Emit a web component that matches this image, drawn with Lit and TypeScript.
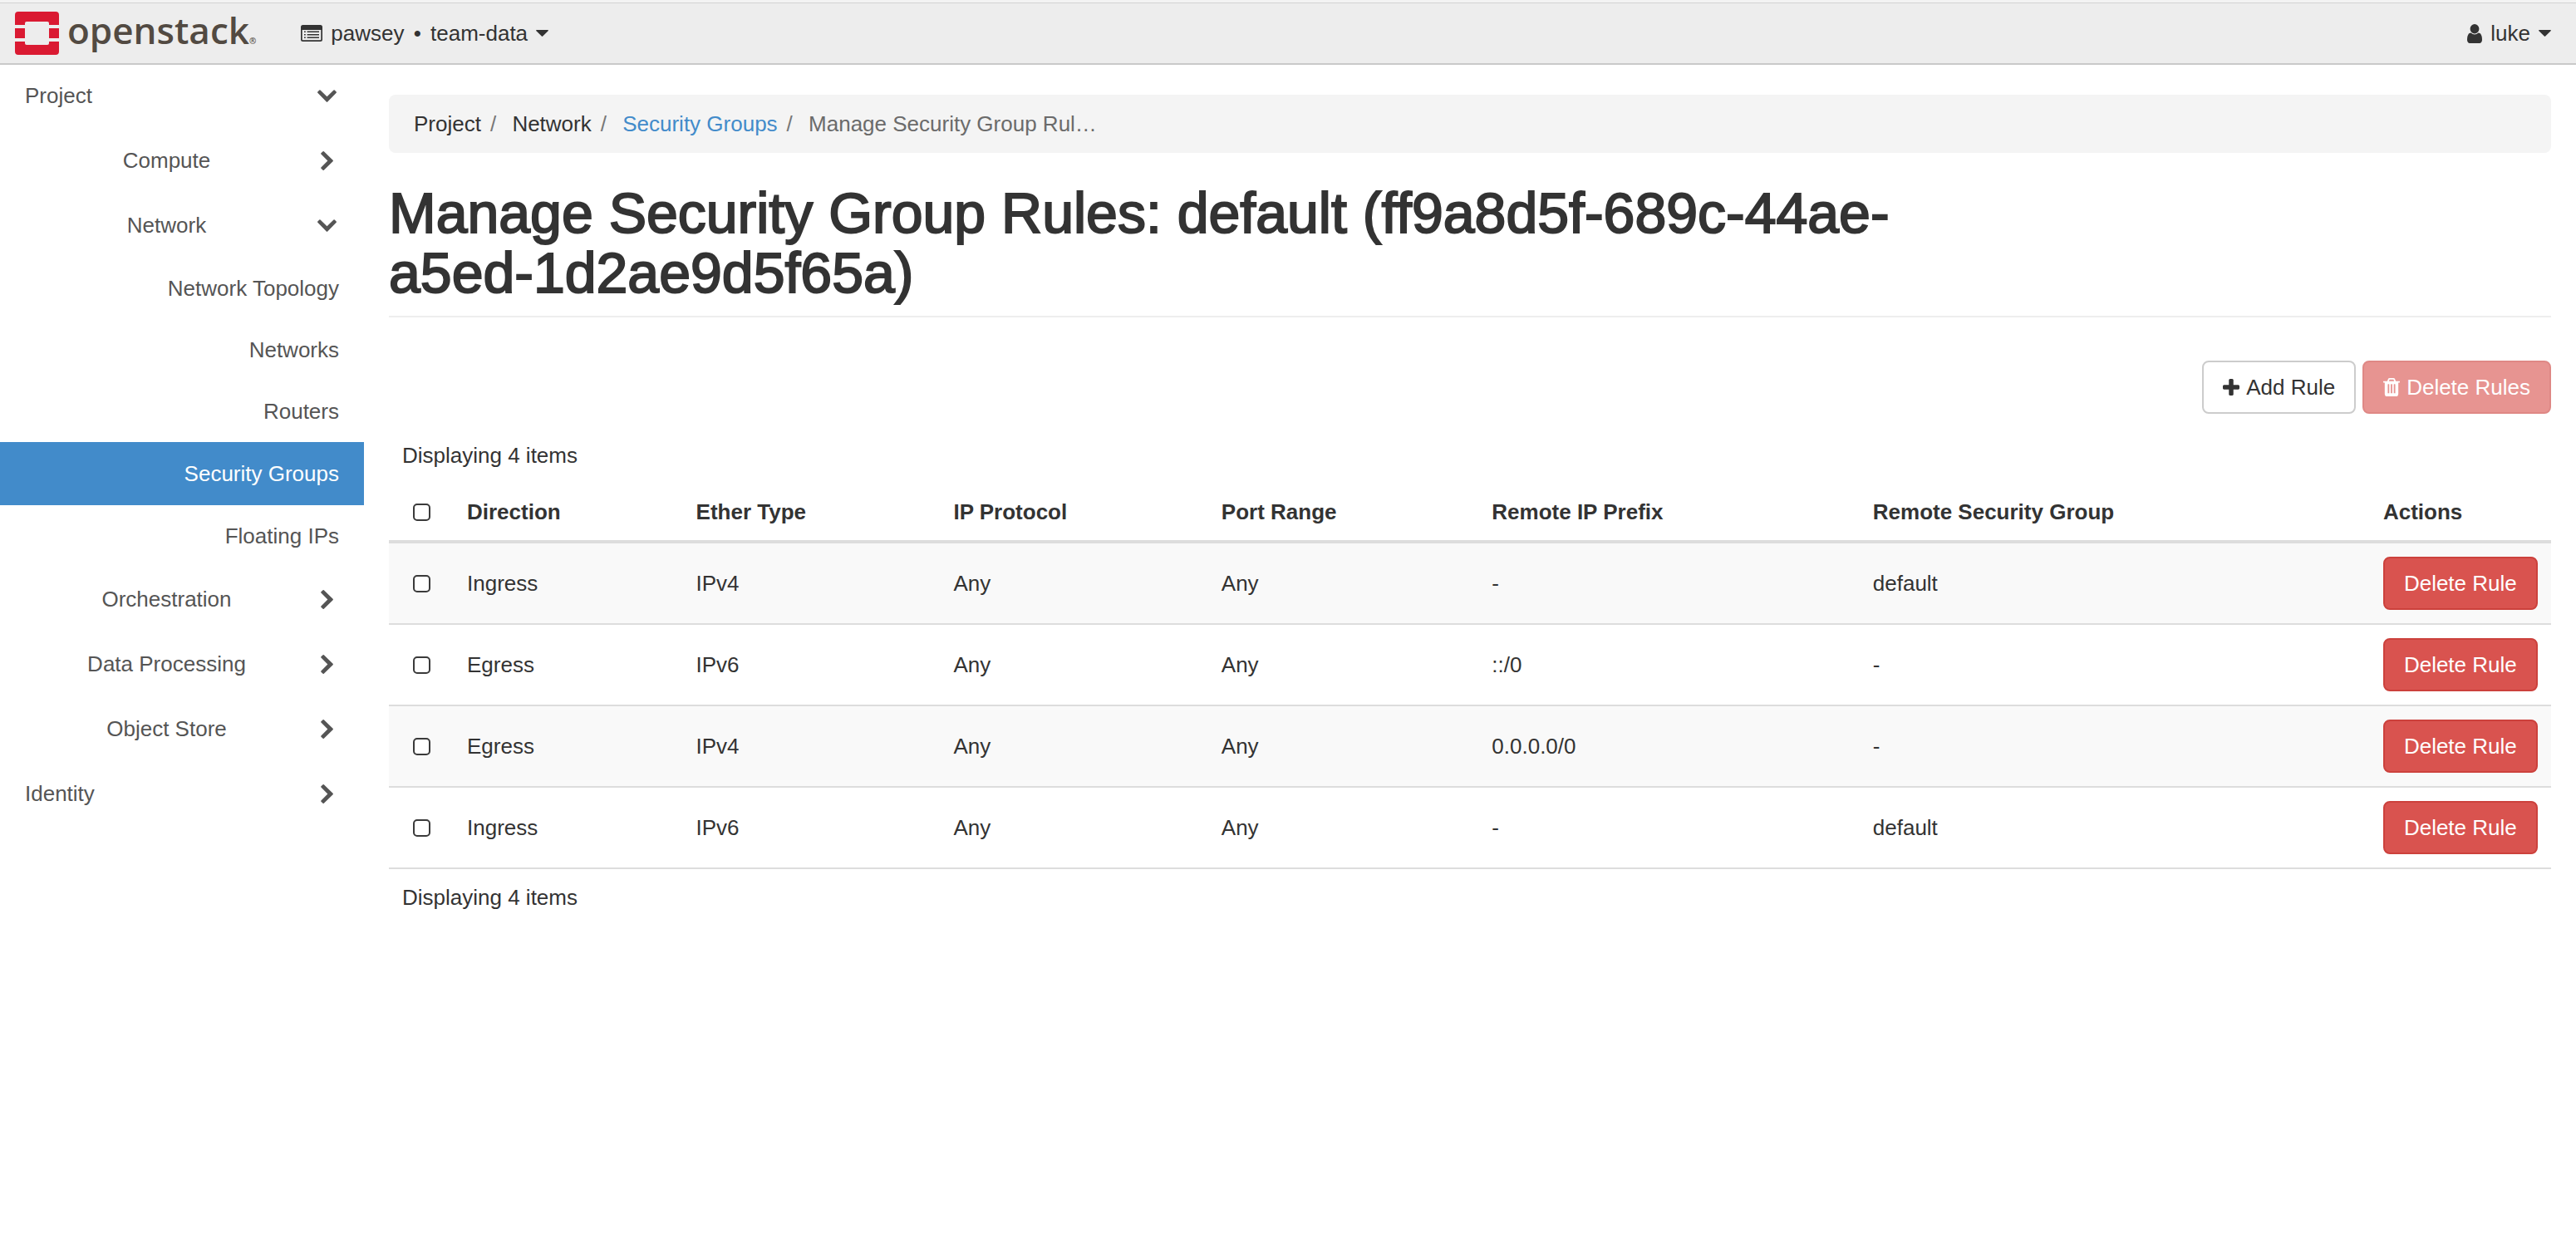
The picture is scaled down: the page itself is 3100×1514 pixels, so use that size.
import { LitElement, html, css, svg } from "lit";
import { customElement, property, state } from "lit/decorators.js";
import { classMap } from "lit/directives/class-map.js";

interface Rule {
  direction: string;
  etherType: string;
  protocol: string;
  portRange: string;
  prefix: string;
  group: string;
}

interface NavGroup {
  label: string;
  top?: boolean;
  open?: boolean;
  children?: string[];
}

const RULES: Rule[] = [
  { direction: "Ingress", etherType: "IPv4", protocol: "Any", portRange: "Any", prefix: "-", group: "default" },
  { direction: "Egress", etherType: "IPv6", protocol: "Any", portRange: "Any", prefix: "::/0", group: "-" },
  { direction: "Egress", etherType: "IPv4", protocol: "Any", portRange: "Any", prefix: "0.0.0.0/0", group: "-" },
  { direction: "Ingress", etherType: "IPv6", protocol: "Any", portRange: "Any", prefix: "-", group: "default" },
];

const NAV: NavGroup[] = [
  { label: "Project", top: true, open: true },
  { label: "Compute" },
  {
    label: "Network",
    open: true,
    children: ["Network Topology", "Networks", "Routers", "Security Groups", "Floating IPs"],
  },
  { label: "Orchestration" },
  { label: "Data Processing" },
  { label: "Object Store" },
  { label: "Identity", top: true },
];

const ICONS = {
  user: {
    box: "256 128 1280 1536",
    w: 18,
    h: 23,
    body: svg`<path d="M1536 1399q0 109-62.5 187t-150.5 78h-854q-88 0-150.5-78t-62.5-187q0-85 8.5-160.5t31.5-152 58.5-131 94-89 134.5-34.5q131 128 313 128t313-128q76 0 134.5 34.5t94 89 58.5 131 31.5 152 8.5 160.5zm-256-887q0 159-112.5 271.5t-271.5 112.5-271.5-112.5-112.5-271.5 112.5-271.5 271.5-112.5 271.5 112.5 112.5 271.5z"/>`,
  },
  plus: {
    box: "192 128 1408 1408",
    w: 20,
    h: 20,
    body: svg`<path d="M1600 736v192q0 40-28 68t-68 28h-416v416q0 40-28 68t-68 28h-192q-40 0-68-28t-28-68v-416h-416q-40 0-68-28t-28-68v-192q0-40 28-68t68-28h416v-416q0-40 28-68t68-28h192q40 0 68 28t28 68v416h416q40 0 68 28t28 68z"/>`,
  },
  trash: {
    box: "192 128 1408 1536",
    w: 20,
    h: 22,
    body: svg`<path d="M704 1376v-704q0-14-9-23t-23-9h-64q-14 0-23 9t-9 23v704q0 14 9 23t23 9h64q14 0 23-9t9-23zm256 0v-704q0-14-9-23t-23-9h-64q-14 0-23 9t-9 23v704q0 14 9 23t23 9h64q14 0 23-9t9-23zm256 0v-704q0-14-9-23t-23-9h-64q-14 0-23 9t-9 23v704q0 14 9 23t23 9h64q14 0 23-9t9-23zm-544-992h448l-48-117q-7-9-17-11h-317q-10 2-17 11zm928 32v64q0 14-9 23t-23 9h-96v948q0 83-47 143.5t-113 60.5h-832q-66 0-113-58.5t-47-141.5v-952h-96q-14 0-23-9t-9-23v-64q0-14 9-23t23-9h309l70-167q15-37 54-63t79-26h320q40 0 79 26t54 63l70 167h309q14 0 23 9t9 23z"/>`,
  },
  list: {
    box: "0 0 26 20",
    w: 26,
    h: 20,
    body: svg`<path fill-rule="evenodd" d="M2.500 0h21a2.500 2.500 0 0 1 2.500 2.500v15a2.500 2.500 0 0 1-2.500 2.500h-21a2.500 2.500 0 0 1-2.500-2.500v-15a2.500 2.500 0 0 1 2.500-2.500zM1.700 6v11.500q0 .8.8.8h21q.8 0 .8-.8v-11.500z"/>
      <path d="M4 7.600h1.800v1.500h-1.800zM4 11h1.800v1.500h-1.800zM4 14.500h1.800v1.500h-1.800zM7.600 7.600h14.400v1.500h-14.400zM7.600 11h14.400v1.500h-14.400zM7.600 14.500h14.400v1.500h-14.400z"/>`,
  },
  caret: {
    box: "0 0 15 8",
    w: 15,
    h: 8,
    body: svg`<path d="M.8 0h13.400q1.200.2.400 1.200l-6.400 6.400q-.7.600-1.400 0l-6.400-6.400q-.8-1 .4-1.200z"/>`,
  },
  down: {
    box: "0 0 23 15",
    w: 23,
    h: 15,
    body: svg`<path d="M3.500.4q-.6-.5-1.200 0l-2 2.200q-.5.600 0 1.200l10.500 10.800q.7.600 1.400 0l10.500-10.800q.5-.6 0-1.200l-2-2.200q-.6-.5-1.200 0l-8 7.900z"/>`,
  },
  right: {
    box: "0 0 15 23",
    w: 15,
    h: 23,
    body: svg`<path d="M.4 19.500q-.5.600 0 1.200l2.200 2q.6.500 1.200 0l10.800-10.500q.6-.7 0-1.400l-10.800-10.500q-.6-.5-1.200 0l-2.200 2q-.5.600 0 1.200l7.900 8z"/>`,
  },
};

const icon = (name: keyof typeof ICONS) => {
  const i = ICONS[name];
  return html`<svg class="icon" viewBox=${i.box} width=${i.w} height=${i.h} preserveAspectRatio="none" aria-hidden="true">${i.body}</svg>`;
};

const base = css`
  * {
    box-sizing: border-box;
  }
  button {
    font: inherit;
    color: inherit;
    background: none;
    border: 0;
    padding: 0;
    cursor: pointer;
  }
  a {
    color: inherit;
    text-decoration: none;
  }
  .icon {
    display: block;
    flex: none;
    fill: currentColor;
  }
`;

@customElement("top-bar")
class TopBar extends LitElement {
  static styles = [
    base,
    css`
      :host {
        display: block;
        position: relative;
      }
      .edge {
        height: 4px;
        background: #f3f3f3;
        border-bottom: 1px solid #d2d2d2;
      }
      .bar {
        display: flex;
        align-items: center;
        height: 72px;
        padding: 0 30px 0 18px;
        background: #ededed;
        box-shadow: 0 2px 0 #c9c9c9;
      }
      .brand {
        display: flex;
        align-items: center;
        gap: 10px;
        margin-right: 54px;
      }
      .mark {
        display: block;
      }
      .word {
        padding-bottom: 8px;
        font: 600 44px/52px "Open Sans", sans-serif;
        color: #524a42;
      }
      .reg {
        font-size: 10px;
        line-height: 10px;
      }
      .menu {
        display: flex;
        align-items: center;
        gap: 10px;
      }
      .dot {
        margin: 0 4px;
      }
      .user {
        margin-left: auto;
      }
    `,
  ];

  render() {
    return html`
      <div class="edge"></div>
      <header class="bar">
        <a class="brand" href="#" aria-label="openstack">
          <svg class="mark" width="53" height="52" viewBox="0 0 53 52" fill="#da1a32" aria-hidden="true">
            <path d="M4 0h45a4 4 0 0 1 4 4v12H41v-2a2 2 0 0 0-2-2H14a2 2 0 0 0-2 2v2H0V4a4 4 0 0 1 4-4z" />
            <path d="M0 20h12v12H0zM41 20h12v12H41z" />
            <path d="M0 36h12v2a2 2 0 0 0 2 2h25a2 2 0 0 0 2-2v-2h12v12a4 4 0 0 1-4 4H4a4 4 0 0 1-4-4z" />
          </svg>
          <span class="word">openstack<span class="reg">®</span></span>
        </a>
        <button class="menu" type="button" aria-haspopup="true">
          ${icon("list")}<span>pawsey <span class="dot">•</span> team-data</span>${icon("caret")}
        </button>
        <button class="menu user" type="button" aria-haspopup="true">
          ${icon("user")}<span>luke</span>${icon("caret")}
        </button>
      </header>
    `;
  }
}

@customElement("side-nav")
class SideNav extends LitElement {
  @property() current = "Security Groups";

  static styles = [
    base,
    css`
      :host {
        display: block;
        color: #555;
      }
      .group {
        display: flex;
        align-items: center;
        gap: 8px;
        width: 100%;
        height: 78px;
        padding: 0 30px;
      }
      .label {
        flex: 1;
        text-align: center;
      }
      .top .label {
        text-align: left;
      }
      .arrow {
        display: flex;
        justify-content: center;
        width: 29px;
      }
      .leaf {
        display: flex;
        align-items: center;
        justify-content: flex-end;
        height: 74px;
        padding: 0 30px;
      }
      .active {
        height: 76px;
        background: #428bca;
        color: #fff;
      }
    `,
  ];

  render() {
    return html`<nav>
      ${NAV.map(
        (g) => html`
          <button class=${classMap({ group: true, top: !!g.top })} type="button" aria-expanded=${g.open ? "true" : "false"}>
            <span class="label">${g.label}</span>
            <span class="arrow">${icon(g.open ? "down" : "right")}</span>
          </button>
          ${(g.children ?? []).map(
            (c) => html`<a class=${classMap({ leaf: true, active: c === this.current })} href="#">${c}</a>`
          )}
        `
      )}
    </nav>`;
  }
}

@customElement("app-root")
class AppRoot extends LitElement {
  @state() private rules = RULES;

  static styles = [
    base,
    css`
      :host {
        display: block;
        min-height: 100vh;
        background: #fff;
        color: #333;
        font: 26px/36px "Liberation Sans", Arial, sans-serif;
      }
      .layout {
        display: grid;
        grid-template-columns: 438px minmax(0, 1fr);
      }
      .content {
        padding: 38px 30px;
      }
      .crumbs {
        display: flex;
        margin: 0;
        padding: 17px 30px;
        list-style: none;
        background: #f4f4f4;
        border-radius: 8px;
      }
      .crumb + .crumb::before {
        content: "/\\00a0";
        padding: 0 12px 0 11px;
        color: #777;
      }
      .link {
        color: #428bca;
      }
      .here {
        color: #6b6b6b;
      }
      .head {
        margin-top: 36px;
        padding-bottom: 16px;
        border-bottom: 2px solid #eee;
      }
      .title {
        max-width: 75%;
        margin: 0;
        font-size: 68px;
        line-height: 72px;
        font-weight: 400;
        -webkit-text-stroke: 2px #333;
      }
      .tools {
        display: flex;
        justify-content: flex-end;
        gap: 8px;
        margin: 52px 0 16px;
      }
      .btn {
        display: inline-flex;
        align-items: center;
        gap: 8px;
        padding: 12px 23px;
        border: 2px solid #ccc;
        border-radius: 8px;
        background: #fff;
        vertical-align: top;
        white-space: nowrap;
      }
      .danger {
        background: #d9534f;
        border-color: #cc413c;
        color: #fff;
      }
      .btn:disabled {
        opacity: 0.62;
        cursor: default;
      }
      .rules {
        width: 100%;
        table-layout: fixed;
        border-spacing: 0;
      }
      .c-check {
        width: 78px;
      }
      .c-dir {
        width: 10.59%;
      }
      .c-ether {
        width: 11.91%;
      }
      .c-proto {
        width: 12.39%;
      }
      .c-port {
        width: 12.51%;
      }
      .c-prefix {
        width: 17.62%;
      }
      .c-act {
        width: 218px;
      }
      .cell {
        padding: 16px;
        text-align: left;
        vertical-align: middle;
      }
      .col {
        border-bottom: 4px solid #ddd;
        font-weight: 700;
      }
      .data {
        border-bottom: 2px solid #ddd;
      }
      .row:nth-child(odd) {
        background: #f9f9f9;
      }
      .pick {
        text-align: center;
      }
      .box {
        appearance: none;
        display: block;
        width: 21px;
        height: 21px;
        margin: 0 auto;
        border: 2px solid #3a3a3a;
        border-radius: 5px;
        background: #fff;
      }
    `,
  ];

  render() {
    const count = `Displaying ${this.rules.length} items`;
    return html`
      <top-bar></top-bar>
      <div class="layout">
        <side-nav></side-nav>
        <main class="content">
          <ol class="crumbs">
            <li class="crumb">Project</li>
            <li class="crumb">Network</li>
            <li class="crumb"><a class="link" href="#">Security Groups</a></li>
            <li class="crumb"><span class="here">Manage Security Group Rul…</span></li>
          </ol>
          <div class="head">
            <h1 class="title">Manage Security Group Rules: default (ff9a8d5f-689c-44ae-a5ed-1d2ae9d5f65a)</h1>
          </div>
          <div class="tools">
            <button class="btn" type="button">${icon("plus")}<span>Add Rule</span></button>
            <button class="btn danger" type="button" disabled>${icon("trash")}<span>Delete Rules</span></button>
          </div>
          <table class="rules">
            <colgroup>
              <col class="c-check" />
              <col class="c-dir" />
              <col class="c-ether" />
              <col class="c-proto" />
              <col class="c-port" />
              <col class="c-prefix" />
              <col />
              <col class="c-act" />
            </colgroup>
            <thead>
              <tr>
                <td class="cell" colspan="8">${count}</td>
              </tr>
              <tr>
                <th class="cell col pick"><input class="box" type="checkbox" aria-label="Select all rules" /></th>
                ${[
                  "Direction",
                  "Ether Type",
                  "IP Protocol",
                  "Port Range",
                  "Remote IP Prefix",
                  "Remote Security Group",
                  "Actions",
                ].map((h) => html`<th class="cell col" scope="col">${h}</th>`)}
              </tr>
            </thead>
            <tbody>
              ${this.rules.map(
                (r) => html`<tr class="row">
                  <td class="cell data pick">
                    <input class="box" type="checkbox" aria-label="Select ${r.direction} ${r.etherType} rule" />
                  </td>
                  <td class="cell data">${r.direction}</td>
                  <td class="cell data">${r.etherType}</td>
                  <td class="cell data">${r.protocol}</td>
                  <td class="cell data">${r.portRange}</td>
                  <td class="cell data">${r.prefix}</td>
                  <td class="cell data">${r.group}</td>
                  <td class="cell data"><button class="btn danger" type="button">Delete Rule</button></td>
                </tr>`
              )}
            </tbody>
            <tfoot>
              <tr>
                <td class="cell" colspan="8">${count}</td>
              </tr>
            </tfoot>
          </table>
        </main>
      </div>
    `;
  }
}
